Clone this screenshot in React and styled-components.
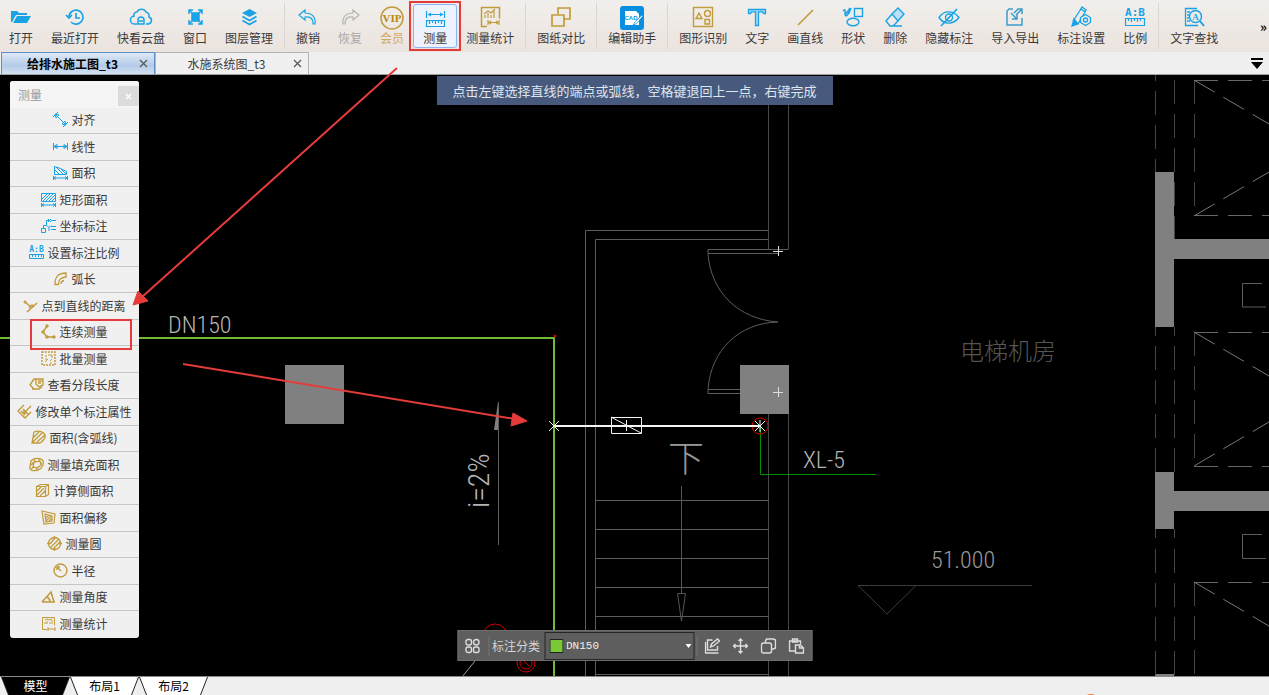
import * as React from 'react'
import styled, { createGlobalStyle } from 'styled-components'

const colors = {
    blue: '#19a3e6',
    gold: '#c19b3c',
    grey: '#b4b4b4',
    red: '#e53b3b',
    wall: '#808080',
    green: '#72bb34',
    panel: '#f0f0f0',
    text: '#3a3a3a'
}

const CJK = '"Noto Sans CJK SC", sans-serif'
const CAD = '"Roboto Condensed", Lato, sans-serif'

const GlobalStyle = createGlobalStyle`
    * {
        box-sizing: border-box;
    }
    body {
        margin: 0;
        font-family: ${CJK};
        font-size: 12px;
        color: ${colors.text};
    }
    button, select {
        margin: 0;
        padding: 0;
        border: 0;
        background: none;
        color: inherit;
        font: inherit;
    }
`

const Window = styled.div`
    position: relative;
    height: 100vh;
    display: flex;
    flex-direction: column;
    overflow: hidden;
    background: #efefef;
`

const Toolbar = styled.div`
    flex: none;
    display: flex;
    align-items: center;
    height: 52px;
    background: linear-gradient(#f1efec, #ebe3de);
`

const Separator = styled.div`
    width: 1px;
    height: 46px;
    margin: 0 2px;
    background: #d9d6d3;
`

const ToolButton = styled.button`
    position: relative;
    flex: none;
    display: flex;
    flex-direction: column;
    align-items: center;
    height: 44px;
    padding: ${props => props.$active ? '1px 9px' : '2px 9px'};
    border: ${props => props.$active ? '1px solid #8fb4f5' : '0'};
    border-radius: 3px;
    background: ${props => props.$active ? '#ecf3ff' : 'none'};
    color: ${props => props.$color || colors.text};
    line-height: 15px;
    white-space: nowrap;

    & > svg {
        flex: none;
        overflow: visible;
    }
`

const Highlight = styled.span`
    position: absolute;
    inset: ${props => props.$inset};
    border: 2px solid ${colors.red};
    pointer-events: none;
`

const MoreButton = styled.button`
    margin-left: auto;
    padding-right: 2px;
    font-size: 13px;
    font-weight: bold;
    color: #000;
`

const TabBar = styled.div`
    flex: none;
    display: flex;
    height: 23px;
    padding-left: 1px;
    border-bottom: 1px solid #a0a0a0;
`

const Tab = styled.div`
    display: flex;
    align-items: center;
    width: 154px;
    border: 1px solid ${props => props.$active ? '#5f8fc4' : '#b5b5b5'};
    border-bottom: 0;
    background: ${props => props.$active ? 'linear-gradient(#dfe9f6, #b4cbe8 60%, #d3e1f3)' : colors.panel};
    color: ${props => props.$active ? '#000' : colors.text};
    font-weight: ${props => props.$active ? 'bold' : 'normal'};
`

const TabName = styled.button`
    flex: 1;
    padding-left: 10px;
    line-height: 20px;
`

const TabClose = styled.button`
    display: flex;
    padding: 5px 6px;
`

const TabMenu = styled.button`
    display: flex;
    align-items: center;
    margin-left: auto;
    padding-right: 6px;
`

const Canvas = styled.main`
    position: relative;
    flex: 1;
    overflow: hidden;
    background: #000;
    border-bottom: 1px solid #8a8a8a;
`

const Drawing = styled.svg`
    position: absolute;
    inset: 0;
    width: 100%;
    height: 100%;
`

const Arrows = styled.svg`
    position: absolute;
    inset: 0;
    width: 100%;
    height: 100%;
    pointer-events: none;
`

const Prompt = styled.div`
    position: absolute;
    top: 1px;
    left: 50%;
    transform: translateX(-50%);
    padding: 0 16px;
    background: #475a7d;
    color: #dfe5ee;
    font-size: 13px;
    line-height: 29px;
    white-space: nowrap;
`

const Palette = styled.section`
    position: absolute;
    top: 6px;
    left: 10px;
    width: 129px;
    border-radius: 3px;
    background: ${colors.panel};
`

const PaletteHeader = styled.header`
    display: flex;
    align-items: center;
    justify-content: space-between;
    height: 27px;
    padding-left: 8px;
    border-radius: 3px 3px 0 0;
    background: #f5f5f5;
    color: #999;
`

const PaletteClose = styled.button`
    display: flex;
    align-items: center;
    justify-content: center;
    width: 21px;
    height: 20px;
    margin-top: 3px;
    background: #dcdcdc;
`

const PaletteRow = styled.button`
    position: relative;
    display: flex;
    align-items: center;
    justify-content: center;
    gap: 3px;
    width: 100%;
    height: 26px;
    padding-bottom: 2px;
    border-bottom: 1px solid #c6c6c6;
    white-space: nowrap;

    &:nth-of-type(even) {
        height: 27px;
    }
    &:last-child {
        border-bottom: 0;
    }
`

const AnnotationBar = styled.div`
    position: absolute;
    bottom: 15px;
    left: 50%;
    transform: translateX(-50%);
    display: flex;
    align-items: center;
    height: 31px;
    padding: 0 7px 0 6px;
    border: 1px solid #6e6e6e;
    background: #5e5e5e;
    color: #d5d5d5;
    white-space: nowrap;
`

const BarDivider = styled.div`
    width: 1px;
    height: 20px;
    margin: ${props => props.$margin};
    background: #757575;
`

const BarButtons = styled.div`
    display: flex;
    gap: 12px;
`

const BarButton = styled.button`
    display: flex;
`

const SelectBox = styled.div`
    display: flex;
    align-items: center;
    width: 150px;
    height: 28px;
    margin: 0 2px 0 4px;
    padding: 0 2px 0 4px;
    border: 1px solid #262626;
`

const Swatch = styled.span`
    width: 14px;
    height: 14px;
    border: 1px solid #222;
    background: #79c837;
`

const CategorySelect = styled.select`
    flex: 1;
    padding-left: 3px;
    appearance: none;
    outline: none;
    font-family: "Liberation Mono", monospace;
    font-size: 11px;
    color: #eee;
`

const LayoutBar = styled.footer`
    position: relative;
    flex: none;
    display: flex;
    height: 18px;
    padding-left: 1px;
    overflow: hidden;
`

const LayoutTab = styled.button`
    position: relative;
    z-index: 0;
    width: 69px;
    line-height: 18px;
    color: ${props => props.$active ? '#fff' : '#000'};

    &::before, &::after {
        content: '';
        position: absolute;
        z-index: -1;
        inset: 0;
        clip-path: polygon(0 0, 100% 0, calc(100% - 7px) 100%, 7px 100%);
        background: #222;
    }
    &::after {
        inset: 0 1px;
        background: ${props => props.$active ? '#000' : '#fff'};
    }
`

const FloatingBall = styled.span`
    position: absolute;
    top: 17px;
    right: 170px;
    width: 16px;
    height: 16px;
    border-radius: 50%;
    background: #f37335;
`

function Icon({ size = 24, color = colors.blue, width = 1.2, children }) {
    return (
        <svg
            width={size}
            height={size}
            viewBox={`0 0 ${size} ${size}`}
            fill="none"
            stroke={color}
            strokeWidth={width}
            aria-hidden="true"
        >
            {children}
        </svg>
    )
}

// Toolbar icons, all on a 24px grid
const toolIcons = {
    open: (
        <g fill={colors.blue} stroke="none">
            <path d="M2 5h6l2 2h8v2H7l-4 7H2z" />
            <path d="M8 10h14l-4 7H4z" />
        </g>
    ),
    recent: (
        <g strokeWidth="1.7">
            <path d="M6 11a7 7 0 1 1 2 5M13 7v5h4" />
            <path d="M3 9l3 3 3-3" />
        </g>
    ),
    cloud: (
        <g strokeWidth="1.5">
            <path d="M8 18H6a4 4 0 0 1-1-8a3 3 0 0 1 3-4a5 5 0 0 1 9 0a4 4 0 0 1 3 5a3.6 3.6 0 0 1-1 7h-2" />
            <path d="M9 18v-4a3 3 0 0 1 6 0v4zM10 15h4" />
        </g>
    ),
    frame: (
        <g strokeWidth="1.5">
            <path d="M6 8V4h4M15 4h4v4M19 14v4h-4M10 18H6v-4M6 4l3 3M19 4l-3 3M19 18l-3-3M6 18l3-3" />
            <rect x="9" y="7" width="7" height="8" fill={colors.blue} />
        </g>
    ),
    layers: (
        <g strokeWidth="1.7">
            <path d="M12.500 3l7.500 4-7.500 4-7.500-4z" fill={colors.blue} stroke="none" />
            <path d="M5.500 10.500l7 4 7-4M5.500 14.500l7 4 7-4" />
        </g>
    ),
    undo: <path d="M9 4L3 9l6 5v-3c5-.4 8 1 8 7h2c1-7-3-11-10-11z" />,
    redo: <path d="M15 4l6 5-6 5v-3c-5-.4-8 1-8 7H5C4 11 8 7 15 7z" />,
    vip: (
        <g>
            <circle cx="12" cy="12" r="11" strokeWidth="1.5" />
            <text x="12" y="16" textAnchor="middle" fontFamily="Liberation Serif, serif" fontWeight="bold" fontSize="11" fill="#b8870b" stroke="none">VIP</text>
        </g>
    ),
    measure: (
        <g>
            <path d="M3.500 5v7M21.500 5v7M5 8.500h15" />
            <path d="M8 6.500L4.500 8.500l3.500 2zM17 6.500l3.500 2-3.500 2z" fill={colors.blue} stroke="none" />
            <path d="M3.500 14.500h18v6h-18zM6.500 15v3M9.500 15v2M12.500 15v3M15.500 15v2M18.500 15v3" />
        </g>
    ),
    stats: (
        <g>
            <path d="M9 20.500H3.500v-19h18v11" strokeWidth="1.5" />
            <path d="M7 12V9M10 12V7M13 12V9M16 12V5M6 8l4-3 3 2 4-4M10 14v5M21 14v5M11 16.500h9M13 15l-2 1.500 2 1.500M18 15l2 1.500-2 1.500" />
        </g>
    ),
    compare: (
        <g strokeWidth="1.7">
            <path d="M9 8V2h12v11h-6" />
            <path d="M3 9h12v11H3z" />
        </g>
    ),
    assistant: (
        <g stroke="none">
            <rect y="0" width="24" height="24" rx="3" fill="#0a8fe0" />
            <path d="M5 5h11l3 3v11H5z" fill="#fff" />
            <text x="11" y="14" textAnchor="middle" fontFamily="Liberation Sans, sans-serif" fontWeight="bold" fontSize="6" fill="#0a8fe0">CAD</text>
            <path d="M22 9l-7 7-2 3 3-1 7-8z" fill="#fff" stroke="#0a8fe0" strokeWidth=".7" />
        </g>
    ),
    recognise: (
        <g strokeWidth="1.4">
            <rect x="2.500" y="1.500" width="19" height="19" />
            <path d="M8 7l3 5.500H5zM14 13.500h4.500V18H14z" />
            <circle cx="16.500" cy="7.500" r="3" />
        </g>
    ),
    text: <path d="M3.500 3.500h17v4h-2l-1-1.700h-4V19.500h-3V5.800h-4l-1 1.700h-2z" fill="#a5daf6" strokeWidth="1.3" />,
    line: <path d="M5 19L20 4" strokeWidth="1.6" />,
    shapes: (
        <g strokeWidth="1.4">
            <path d="M2 5c3-3 2 0 2 3 0 4 4 1 6-6M9 2l-2 3 1 3M7 5L4 9" />
            <rect x="13.500" y="2.500" width="8" height="8" />
            <ellipse cx="12" cy="16" rx="6" ry="3.700" />
        </g>
    ),
    eraser: (
        <g strokeWidth="1.4">
            <path d="M9 8l6-6 6 6-6 7z" fill="#b9e0f5" />
            <path d="M9 8l-6 7 4 5h3l5-5M7 20h12" />
        </g>
    ),
    hide: (
        <g strokeWidth="1.4">
            <path d="M2 11.500c5-7.500 14-7.500 20 0c-6 7.500-15 7.500-20 0z" />
            <circle cx="12" cy="11.500" r="3.500" />
            <path d="M20 3L4 20" strokeWidth="1.7" />
        </g>
    ),
    transfer: (
        <g strokeWidth="1.5">
            <path d="M10 3H6L4 5v14h15v-7" />
            <path d="M8 7l6 6M14 8v5H9M11 7l4-4h4v5M19 3l-6 6" />
        </g>
    ),
    settings: (
        <g strokeWidth="1.3">
            <path d="M4 15L12 3l4 3-7 12M11 4l2-3 4 3-1 2" />
            <path d="M5 13l-2 7 6-2z" fill={colors.blue} />
            <path d="M16.500 8.500l5 3v5l-5 3-5-3v-5z" fill="#eee9e6" />
            <circle cx="16.500" cy="14" r="2" />
        </g>
    ),
    ratio: (
        <g>
            <text x="12" y="10" textAnchor="middle" fontFamily="DejaVu Sans Mono, monospace" fontWeight="bold" fontSize="11" fill={colors.blue} stroke="none">A:B</text>
            <path d="M2.500 12.500h19v7h-19zM5.500 13v2M8.500 13v3M11.500 13v2M14.500 13v3M17.500 13v2" />
        </g>
    ),
    find: (
        <g strokeWidth="1.3">
            <path d="M15 2.500H3.500v17H16M5 6h3M5 9h2M5 12h2M5 15h3" />
            <circle cx="13.500" cy="10.500" r="6" strokeWidth="1.5" />
            <path d="M18 15l4 5" strokeWidth="2" />
            <text x="13.500" y="14" textAnchor="middle" fontFamily="Liberation Serif, serif" fontWeight="bold" fontSize="9" fill={colors.blue} stroke="none">A</text>
        </g>
    )
}

// Palette icons, all on a 15px grid
const paletteIcons = {
    align: <path d="M0 5l5-5M10 15l5-5M3 3l9 9M2 2l4 1-3 3zM13 13l-1-4-3 3z" />,
    linear: <path d="M.5 4v7M14.500 4v7M1 7.500h13M4 5.500l-3 2 3 2zM11 5.500l3 2-3 2z" />,
    area: <path d="M1.500 1.500l6 2 6 3v3h-12zM2 5l4 4M3 2l7 7M8 4l5 5M.5 11v4M14.500 11v4M1 13h13M3 11.500L1 13l2 1.500M12 11.500l2 1.500-2 1.500" />,
    rect: <path d="M.5 1.500h14v8H.5zM1 7l5-5M2 9l7-7M5 9l7-7M8 9l6-6M11 9l3-3M.5 11v4M14.500 11v4M1 13h13M3 11.500L1 13l2 1.500M12 11.500l2 1.500-2 1.500" />,
    coord: <path d="M.5 10.500h4v4h-4zM2.500 10V7.500h3v-5H8M10 2.500h5M7 1l3 3M10 1L7 4M10 8.500h5M10 11.500h5M6 7.500l2 2 2-2M8 9.500V13" />,
    ratio: (
        <g>
            <text x="7.500" y="7" textAnchor="middle" fontFamily="DejaVu Sans Mono, monospace" fontWeight="bold" fontSize="8" fill={colors.blue} stroke="none">A:B</text>
            <path d="M.5 9.500h14v4H.5zM3.500 10v2M6.500 10v2M9.500 10v2M12.500 10v2" />
        </g>
    ),
    arc: (
        <g strokeWidth="1.3">
            <path d="M2 13.500h3.500C5.500 9 7 6.500 13 6V2C5 2 2 6 2 13.500z" />
            <path d="M8 13c0-2 1-3 3-3.500" />
        </g>
    ),
    distance: (
        <g strokeWidth="1.5">
            <path d="M2 4l6 5M4 14l10-9M6 10l3-3 2 2" />
            <circle cx="2" cy="4" r="1.5" fill={colors.gold} stroke="none" />
        </g>
    ),
    chain: (
        <g>
            <path d="M6 2L2 8l4 5h7" strokeWidth="1.4" />
            <g fill={colors.gold} stroke="none">
                <circle cx="6" cy="2" r="1.7" />
                <circle cx="2" cy="8" r="1.7" />
                <circle cx="6" cy="13" r="1.7" />
                <circle cx="13" cy="13" r="1.7" />
            </g>
        </g>
    ),
    batch: (
        <g>
            <rect x="1" y="1" width="13" height="13" strokeDasharray="2 1" strokeWidth="1.5" />
            <path d="M4 11l3-3M7 4h4v3M4 5h2M4 8h2M9 10l2-2M9 12h2" />
        </g>
    ),
    segments: <path d="M5 12L1 8l4-6h3M3 12h8M7 2h7v6l-4 2-3-3zM9 4h4M9 6h3M10 12l3-2" strokeWidth="1.4" />,
    modify: <path d="M7 1L1 7l7 7 6-6M4 7l4 4M6 5l5 5M8 8l6-6M7 6v3h3" strokeWidth="1.4" />,
    arcArea: <path d="M3 2c5-2 10 0 11 3s-3 7-5 8H1zM2 8l6-6M2 12l10-10M6 12l8-7" strokeWidth="1.3" />,
    fillArea: (
        <g strokeWidth="1.3">
            <path d="M2 4C5 0 13 1 14 4s-1 8-5 9-9 1-8-3z" />
            <path d="M5 5l6-1 1 4-4 3-4-1zM2 8l3-3M5 2l1 3M10 1v3M13 6l-2 1M8 13v-3M2 12l3-2" />
        </g>
    ),
    sideArea: <path d="M1.500 3.500l4-2h8v10l-3 2h-9zM10.500 3.500v10M1.500 3.500h9l3-2M2 8l4-4M2 12l7-7M5 13l5-5" strokeWidth="1.2" />,
    offset: <path d="M1 1l13 3-1 9-10 1zM4 4l7 2v5l-6 1zM5 8l3-3M5 11l5-5M8 11l3-3" strokeWidth="1.2" />,
    circle: (
        <g strokeWidth="1.3">
            <circle cx="7.500" cy="7.500" r="6" />
            <path d="M3 8l5-6M3 12l9-9M6 13l7-7M7.500 0v3M7.500 12v3M0 7.500h3M12 7.500h3" />
        </g>
    ),
    radius: (
        <g strokeWidth="1.4">
            <circle cx="7.500" cy="7.500" r="6.500" />
            <path d="M8 8L4 4M4 7V4h3" />
        </g>
    ),
    angle: <path d="M1 13h13M1 13l9-10 3 10M6 8c2 1 3 3 3 5" strokeWidth="1.6" />,
    stats: <path d="M6 13.500H1.500v-12h12v8M4 8V6M6 8V5M9 8V6M11 8V4M4 4l2-1 2 1 3-1M7 11v4M14 11v4M7 13h7" />
}

const toolGroups = [
    [
        { icon: 'open', label: '打开' },
        { icon: 'recent', label: '最近打开' },
        { icon: 'cloud', label: '快看云盘' },
        { icon: 'frame', label: '窗口' },
        { icon: 'layers', label: '图层管理' }
    ],
    [
        { icon: 'undo', label: '撤销' },
        { icon: 'redo', label: '恢复', color: colors.grey, textColor: '#aaa' },
        { icon: 'vip', label: '会员', color: colors.gold, textColor: '#cfa860' },
        { icon: 'measure', label: '测量', active: true },
        { icon: 'stats', label: '测量统计', color: colors.gold }
    ],
    [{ icon: 'compare', label: '图纸对比', color: colors.gold }],
    [{ icon: 'assistant', label: '编辑助手' }],
    [
        { icon: 'recognise', label: '图形识别', color: colors.gold },
        { icon: 'text', label: '文字' },
        { icon: 'line', label: '画直线', color: colors.gold },
        { icon: 'shapes', label: '形状' },
        { icon: 'eraser', label: '删除' },
        { icon: 'hide', label: '隐藏标注' },
        { icon: 'transfer', label: '导入导出', color: '#3d9ccb' },
        { icon: 'settings', label: '标注设置' },
        { icon: 'ratio', label: '比例' }
    ],
    [{ icon: 'find', label: '文字查找' }]
]

const paletteItems = [
    ['align', '对齐'],
    ['linear', '线性'],
    ['area', '面积'],
    ['rect', '矩形面积'],
    ['coord', '坐标标注'],
    ['ratio', '设置标注比例'],
    ['arc', '弧长', true],
    ['distance', '点到直线的距离', true],
    ['chain', '连续测量', true],
    ['batch', '批量测量', true],
    ['segments', '查看分段长度', true],
    ['modify', '修改单个标注属性', true],
    ['arcArea', '面积(含弧线)', true],
    ['fillArea', '测量填充面积', true],
    ['sideArea', '计算侧面积', true],
    ['offset', '面积偏移', true],
    ['circle', '测量圆', true],
    ['radius', '半径', true],
    ['angle', '测量角度', true],
    ['stats', '测量统计', true]
]

function CloseMark({ size = 9, color = '#555' }) {
    return (
        <Icon size={size} color={color}>
            <path d={`M1 1L${size - 1} ${size - 1}M${size - 1} 1L1 ${size - 1}`} />
        </Icon>
    )
}

function FloorPlan() {
    // Plan coordinates start at the top of the window, the canvas starts at 75
    return (
        <Drawing aria-label="CAD">
            <g transform="translate(0 -75)" fill="none" stroke="#5c5c5c">
                {/* Columns and solid walls */}
                <g fill={colors.wall} stroke="none">
                    <path d="M285 365h59v59h-59zM740 365h49v49h-49z" />
                    <path d="M1155 172h19v67h95v20h-95v68h-19z" />
                    <path d="M1155 472h19v19h95v20h-95v18h-19zM1155 674h19v3h-19z" />
                    <path d="M498 402l1 28h-5z" />
                </g>

                {/* Stairwell */}
                <path d="M585.500 677V230.500H769M595.500 677V239.500H769" />
                <path d="M768.500 105V249M768.500 414V677M788.500 105V249.500M788.500 414V677" stroke="#484848" />
                <path d="M595 500.500H769M595 529.500H769M595 558.500H769M595 587.500H769M595 616.500H769M595 645.500H769M595 674.500H769" />
                <path d="M681.500 486V593M677.500 593.500H685.500L681.500 621z" stroke="#555" />

                {/* Double door */}
                <path d="M788 249.500H708v4H778M740 389.500H708v4H740" />
                <path d="M708 254C711 292 738 319 778 322C738 323 711 351 708 389" />
                <path d="M773 251.500H783M778.500 246V256M773 392.500H783M778.500 387V397" stroke="#ddd" />

                {/* Lift shafts */}
                <g stroke="#444" strokeDasharray="24 10">
                    <path d="M1155.500 57V172M1155.500 346V472M1155.500 549V677M1174.500 80V239M1174.500 346V472M1174.500 549V677" />
                    <path d="M1155.500 327V336M1174.500 327V336M1155.500 529V538M1174.500 529V538" />
                    <path d="M1194.500 80V216M1194.500 332V466M1194.500 582V677" />
                    <path d="M1194 80.500H1269M1194 215.500H1269M1194 332.500H1269M1194 466.500H1269M1194 582.500H1269" stroke="#666" />
                    <path d="M1194 80L1269 124M1194 216L1269 172M1194 332L1269 376M1194 466L1269 422M1194 582L1269 626" stroke="#777" />
                </g>
                <path d="M1262 283.500H1242.500V307H1266M1262 534.500H1242.500V558.500H1266" />
                <path d="M858 585.500H1032M858 585.500L887 614L916 585.500" stroke="#3c3c3c" />
                <path d="M498.500 402V545" />

                {/* Pipes */}
                <path d="M0 338H554V677" stroke={colors.green} strokeWidth="2" />
                <path d="M760.500 426V474.500H876" stroke="#009000" />
                <g stroke="#d00000">
                    <circle cx="760" cy="426" r="8" />
                    <circle cx="495" cy="636" r="12" />
                    <circle cx="526" cy="663" r="9" />
                    <circle cx="526" cy="663" r="6" />
                    <path d="M523 660l6 6" />
                    <circle cx="555" cy="336" r="1" fill="#f00" />
                </g>
                <path d="M462 677L475 661" stroke="#999" />

                {/* Measured segment */}
                <g stroke="#f5f5f5">
                    <path d="M554 426H760" strokeWidth="2" />
                    <path d="M549 421L559 431M559 421L549 431M755 421L765 431M765 421L755 431M760 420V432" />
                    <path d="M611.500 417.500h30v16h-30zM611 417L641 433M621 425.500h10M626.500 420v11" />
                </g>

                <g fill="#b5b5b5" stroke="none" fontFamily={CAD} fontWeight="300" fontSize="24">
                    <text x="168" y="333">DN150</text>
                    <text x="803" y="468">XL-5</text>
                    <text x="931" y="568" fill="#999">51.000</text>
                    <text transform="translate(489 508) rotate(-90)" fontSize="30">i=2%</text>
                    <text x="960" y="360" fill="#555" fontFamily={CJK}>电梯机房</text>
                    <text x="668" y="472" fill="#999" fontFamily={CJK} fontSize="36">下</text>
                </g>
            </g>
        </Drawing>
    )
}

function MeasurePalette() {
    return (
        <Palette aria-label="测量">
            <PaletteHeader>
                测量
                <PaletteClose aria-label="关闭"><CloseMark size={7} color="#fff" /></PaletteClose>
            </PaletteHeader>
            {paletteItems.map(([icon, label, gold]) => (
                <PaletteRow key={icon}>
                    <Icon size={15} width={1} color={gold ? colors.gold : colors.blue}>{paletteIcons[icon]}</Icon>
                    {label}
                    {icon === 'chain' && <Highlight $inset="-1px 7px -5px 20px" />}
                </PaletteRow>
            ))}
        </Palette>
    )
}

function CategoryBar() {
    return (
        <AnnotationBar>
            <BarButton aria-label="菜单">
                <Icon size={16} color="#ddd" width={1.4}>
                    <rect x="1.500" y="1.500" width="5.500" height="5.500" rx="2" />
                    <rect x="9" y="1.500" width="5.500" height="5.500" rx="2.700" />
                    <rect x="1.500" y="9" width="5.500" height="5.500" rx="2" />
                    <rect x="9" y="9" width="5.500" height="5.500" rx="2" />
                </Icon>
            </BarButton>
            <BarDivider $margin="0 3px 0 8px" />
            <label htmlFor="category">标注分类</label>
            <SelectBox>
                <Swatch />
                <CategorySelect id="category" defaultValue="DN150">
                    <option>DN150</option>
                </CategorySelect>
                <svg width="6" height="4" aria-hidden="true"><path d="M0 0h6L3 4z" fill="#fff" /></svg>
            </SelectBox>
            <BarDivider $margin="0 7px 0 0" />
            <BarButtons>
                <BarButton aria-label="编辑">
                    <Icon size={16} color="#ddd" width={1.4}>
                        <path d="M8 2H3v10h10V8M1 4v11h13M6 9l1-3 6-5 2 2-6 5z" />
                    </Icon>
                </BarButton>
                <BarButton aria-label="移动">
                    <Icon size={16} color="#ddd" width={1.4}>
                        <path d="M8 1v14M1 8h14M6 3l2-2 2 2M6 13l2 2 2-2M3 6L1 8l2 2M13 6l2 2-2 2" />
                    </Icon>
                </BarButton>
                <BarButton aria-label="复制">
                    <Icon size={16} color="#ddd" width={1.4}>
                        <rect x="1" y="5" width="10" height="10" rx="2" />
                        <path d="M5 5V3l1-2h7l2 1v8l-2 1h-2" />
                    </Icon>
                </BarButton>
                <BarButton aria-label="粘贴">
                    <Icon size={16} color="#ddd" width={1.4}>
                        <path d="M7 13H1V3h11v3M4 3V1h5v3H4z" />
                        <path d="M7 7h5l3 3v5H7zM11 7v3h4" />
                    </Icon>
                </BarButton>
            </BarButtons>
        </AnnotationBar>
    )
}

export default function App() {
    return (
        <Window>
            <GlobalStyle />
            <Toolbar>
                {toolGroups.map((group, index) => (
                    <React.Fragment key={index}>
                        {index > 0 && <Separator />}
                        {group.map(tool => (
                            <ToolButton key={tool.icon} $active={tool.active} $color={tool.textColor}>
                                <Icon color={tool.color}>{toolIcons[tool.icon]}</Icon>
                                {tool.label}
                                {tool.active && <Highlight $inset="-4px -5px" />}
                            </ToolButton>
                        ))}
                    </React.Fragment>
                ))}
                <MoreButton aria-label="更多">»</MoreButton>
            </Toolbar>
            <TabBar>
                <Tab $active>
                    <TabName>给排水施工图_t3</TabName>
                    <TabClose aria-label="关闭"><CloseMark /></TabClose>
                </Tab>
                <Tab>
                    <TabName>水施系统图_t3</TabName>
                    <TabClose aria-label="关闭"><CloseMark /></TabClose>
                </Tab>
                <TabMenu aria-label="图纸列表">
                    <svg width="12" height="11" aria-hidden="true"><path d="M0 0h12v2H0zM0 4h12l-6 7z" /></svg>
                </TabMenu>
            </TabBar>
            <Canvas>
                <FloorPlan />
                <Prompt>点击左键选择直线的端点或弧线，空格键退回上一点，右键完成</Prompt>
                <MeasurePalette />
                <CategoryBar />
            </Canvas>
            <LayoutBar>
                <LayoutTab $active>模型</LayoutTab>
                <LayoutTab>布局1</LayoutTab>
                <LayoutTab>布局2</LayoutTab>
                <FloatingBall />
            </LayoutBar>
            <Arrows aria-hidden="true">
                <g stroke={colors.red} fill={colors.red} strokeWidth="2">
                    <path d="M397 68L142 297M183 364L515 419" />
                    <path d="M133 305l5-14 10 10zM527 421l-14-8-2 13z" strokeWidth="1" />
                </g>
            </Arrows>
        </Window>
    )
}
